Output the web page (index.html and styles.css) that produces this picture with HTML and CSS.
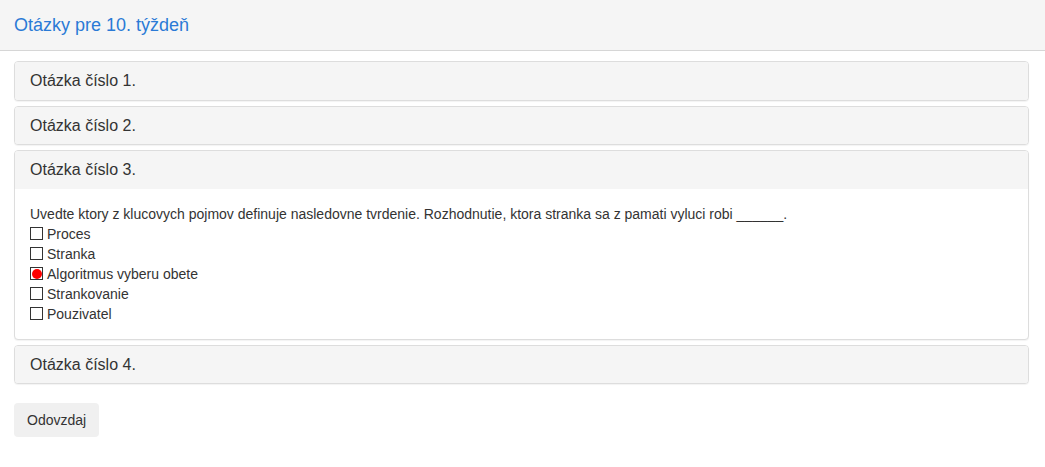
FILE: index.html
```html
<!DOCTYPE html>
<html lang="sk">
<head>
<meta charset="utf-8">
<title>Otázky</title>
<link rel="stylesheet" href="styles.css">
</head>
<body>
<header class="topbar">
  <h1 class="title">Otázky pre 10. týždeň</h1>
</header>
<main class="content">
  <div class="panel-group">
    <section class="panel">
      <div class="panel-heading">Otázka číslo 1.</div>
    </section>
    <section class="panel">
      <div class="panel-heading">Otázka číslo 2.</div>
    </section>
    <section class="panel">
      <div class="panel-heading">Otázka číslo 3.</div>
      <div class="panel-body">
        <p class="question">Uvedte ktory z klucovych pojmov definuje nasledovne tvrdenie. Rozhodnutie, ktora stranka sa z pamati vyluci robi ______.</p>
        <label class="option"><span class="box"></span>Proces</label>
        <label class="option"><span class="box"></span>Stranka</label>
        <label class="option"><span class="box checked"></span>Algoritmus vyberu obete</label>
        <label class="option"><span class="box"></span>Strankovanie</label>
        <label class="option"><span class="box"></span>Pouzivatel</label>
      </div>
    </section>
    <section class="panel">
      <div class="panel-heading">Otázka číslo 4.</div>
    </section>
  </div>
  <button class="btn" type="button">Odovzdaj</button>
</main>
</body>
</html>
```

FILE: styles.css
```css
* { box-sizing: border-box; }
html, body { margin: 0; padding: 0; }
body {
  font-family: "Liberation Sans", Arial, sans-serif;
  color: #333;
  background: #fff;
  font-size: 14px;
}
.topbar {
  height: 51px;
  background: #f5f5f5;
  border-bottom: 1px solid #d6d6d6;
  padding: 0 14px;
  display: flex;
  align-items: center;
}
.title {
  margin: 0;
  font-size: 18px;
  font-weight: normal;
  color: #2a7ad6;
  line-height: 1;
}
.content {
  padding: 10px 16px 0 14px;
}
.panel-group {
  display: flex;
  flex-direction: column;
  gap: 5px;
}
.panel {
  border: 1px solid #ddd;
  border-radius: 4px;
  background: #fff;
  box-shadow: 0 1px 1px rgba(0,0,0,.05);
  overflow: hidden;
}
.panel-heading {
  background: #f5f5f5;
  font-size: 16px;
  line-height: 17.6px;
  padding: 10px 15px;
  color: #333;
}
.panel-body {
  padding: 15px;
  font-size: 14px;
  line-height: 20px;
}
.question { margin: 0; }
.option {
  display: flex;
  align-items: center;
  gap: 4px;
}
.box {
  width: 13px;
  height: 13px;
  border: 1px solid #333;
  display: inline-flex;
  align-items: center;
  justify-content: center;
  background: #fff;
}
.box.checked::after {
  content: "";
  width: 10px;
  height: 10px;
  border-radius: 50%;
  background: #f00;
}
.btn {
  margin-top: 19px;
  font-family: inherit;
  font-size: 14px;
  line-height: 20px;
  padding: 7px 13px;
  border: none;
  border-radius: 4px;
  background: #f0f0f0;
  color: #333;
}
```
